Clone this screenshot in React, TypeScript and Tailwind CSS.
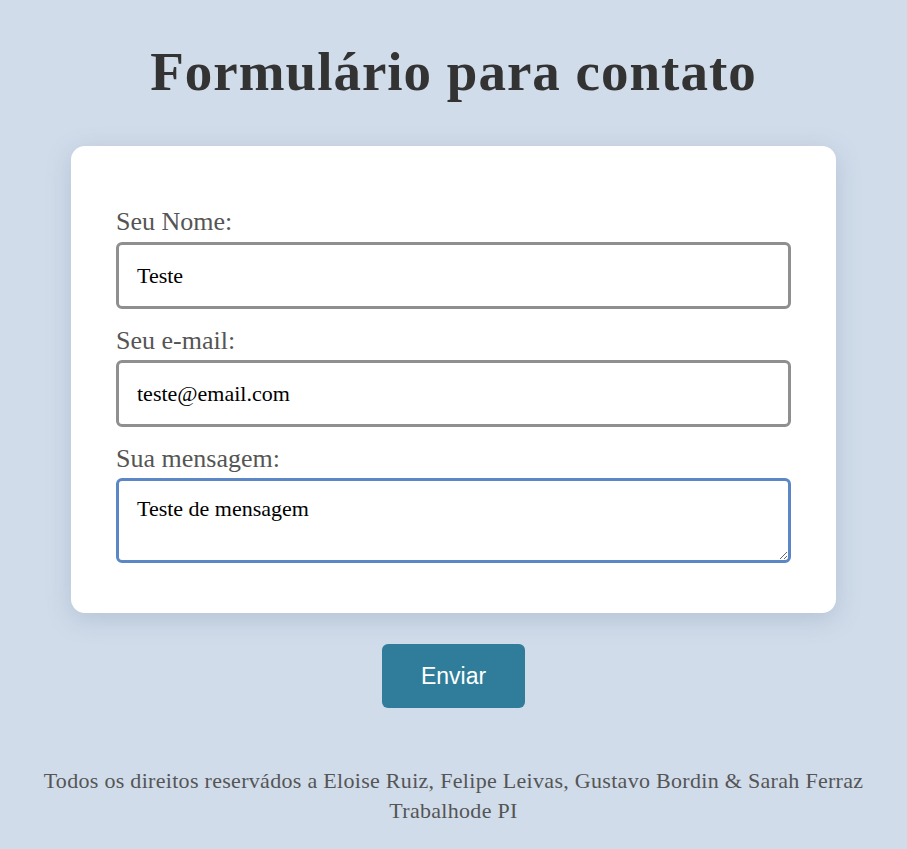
import { useState } from "react";

export default function App() {
  const [name, setName] = useState("Teste");
  const [email, setEmail] = useState("teste@email.com");
  const [msg, setMsg] = useState("Teste de mensagem");

  return (
    <main className="min-h-[849px] bg-[#d0dcea] flex flex-col items-center font-['Liberation_Serif',serif] text-[#333]">
      {/* Header */}
      <h1 className="mt-[42px] text-[55px] leading-[60px] tracking-[1px] font-bold text-[#333]">Formulário para contato</h1>

      {/* Form card */}
      <form
        className="mt-[44px] w-[765px] bg-white rounded-[14px] shadow-[0_6px_24px_rgba(100,120,150,0.25)] px-[45px] pt-[61px] pb-[50px] flex flex-col"
        onSubmit={(e) => e.preventDefault()}
      >
        <label className="text-[26px] leading-[30px] text-[#555] mb-[5px]">Seu Nome:</label>
        <input
          value={name}
          onChange={(e) => setName(e.target.value)}
          className="h-[67px] border-[3px] border-[#8f8f8f] rounded-[6px] px-[18px] text-[22px] text-black outline-none"
        />

        <label className="mt-[17px] text-[26px] leading-[30px] text-[#555] mb-[4px]">Seu e-mail:</label>
        <input
          value={email}
          onChange={(e) => setEmail(e.target.value)}
          className="h-[67px] border-[3px] border-[#8f8f8f] rounded-[6px] px-[18px] text-[22px] text-black outline-none"
        />

        <label className="mt-[17px] text-[26px] leading-[30px] text-[#555] mb-[4px]">Sua mensagem:</label>
        <textarea
          value={msg}
          onChange={(e) => setMsg(e.target.value)}
          className="h-[85px] border-[3px] border-[#5b87c6] rounded-[6px] px-[18px] pt-[15px] text-[22px] leading-[26px] text-black outline-none resize-y"
        />
      </form>

      {/* Submit */}
      <button
        type="button"
        className="mt-[31px] w-[143px] h-[64px] bg-[#2f7d9a] rounded-[6px] text-white text-[23px] font-['Liberation_Sans',sans-serif]"
      >
        Enviar
      </button>

      {/* Footer */}
      <footer className="mt-[58px] text-center text-[22px] leading-[30px] tracking-[0.3px] text-[#555]">
        <p>Todos os direitos reservádos a Eloise Ruiz, Felipe Leivas, Gustavo Bordin &amp; Sarah Ferraz</p>
        <p>Trabalhode PI</p>
      </footer>
    </main>
  );
}
